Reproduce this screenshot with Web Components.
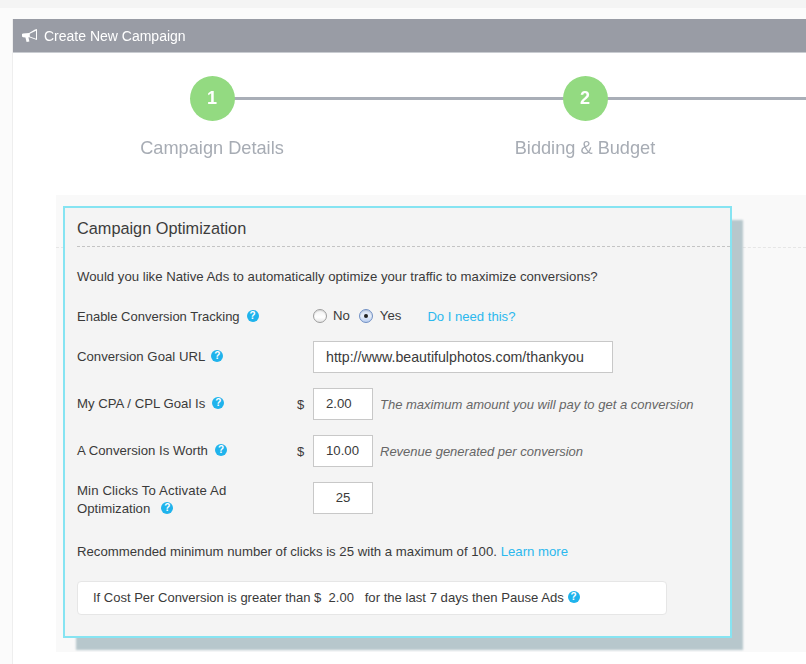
<!DOCTYPE html>
<html>
<head>
<meta charset="utf-8">
<title>Create New Campaign</title>
<style>
  html, body { margin: 0; height: 100%; overflow: hidden; }
  body { background: #fbfbfb; border-top: 8px solid #f4f4f4; box-sizing: border-box; font-family: "Liberation Sans", Arial, sans-serif; color: #3a3a3a; }
  .link { color: #2bb8ee; }
</style>
</head>
<body>
<campaign-panel heading="Create New Campaign">
  <step-track>
    <step-item number="1" label="Campaign Details"></step-item>
    <step-item number="2" label="Bidding &amp; Budget"></step-item>
  </step-track>
  <opt-section>
    <opt-card heading="Campaign Optimization">
      <p class="q">Would you like Native Ads to automatically optimize your traffic to maximize conversions?</p>

      <form-row style="height:32px;margin-top:15px">
        <span slot="label" style="font-size:13px">Enable Conversion Tracking<help-icon style="margin-left:7px"></help-icon></span>
        <radio-opt text="No" style="margin-left:0"></radio-opt>
        <radio-opt text="Yes" checked style="margin-left:9px"></radio-opt>
        <a class="link" style="margin:-2px 0 0 26px;font-size:13.1px">Do I need this?</a>
      </form-row>

      <form-row style="margin-top:8px">
        <span slot="label">Conversion Goal URL<help-icon style="margin-left:6px"></help-icon></span>
        <text-box value="http://www.beautifulphotos.com/thankyou" width="300" style="font-size:14.2px"></text-box>
      </form-row>

      <form-row style="margin-top:15px" prefix="$">
        <span slot="label">My CPA / CPL Goal Is<help-icon style="margin-left:7px"></help-icon></span>
        <text-box value="2.00" width="60"></text-box>
        <em class="hint">The maximum amount you will pay to get a conversion</em>
      </form-row>

      <form-row style="margin-top:15px" prefix="$">
        <span slot="label">A Conversion Is Worth<help-icon style="margin-left:7px"></help-icon></span>
        <text-box value="10.00" width="60"></text-box>
        <em class="hint">Revenue generated per conversion</em>
      </form-row>

      <form-row style="margin-top:15px;align-items:flex-start">
        <span slot="label"><span style="letter-spacing:.12px">Min Clicks To Activate Ad</span><br>Optimization<help-icon style="margin-left:11px"></help-icon></span>
        <text-box value="25" width="60" align="center"></text-box>
      </form-row>

      <p class="rec">Recommended minimum number of clicks is 25 with a maximum of 100. <a class="link">Learn more</a></p>

      <rule-box>If Cost Per Conversion is greater than $&nbsp; 2.00 &nbsp; <span style="font-size:13.14px">for the last 7 days then Pause Ads</span> <help-icon></help-icon></rule-box>
    </opt-card>
  </opt-section>
</campaign-panel>

<template id="campaign-panel-tpl">
  <style>
    :host { display: block; margin: 11px 0 0 13px; padding-bottom: 40px; background: #fff; box-shadow: -1px 0 0 #eee; }
    header { height: 34px; box-sizing: border-box; background: #999ca5; border-bottom: 1px solid #c9ccd1; color: #fff; font-size: 14px;
      display: flex; align-items: center; padding-left: 9px; filter: blur(.5px); }
    svg { width: 15px; height: 13px; margin-right: 7px; fill: #fff; }
  </style>
  <header>
    <svg viewBox="0 0 15 13"><path d="M0 5 L1 4.4 L7 4 L13 .6 L15 0 V11 L13.4 10.6 L7.2 8.2 L6.4 8.3 L7.4 12.4 L4.6 13 L3.4 8.4 L1 8.2 L0 7.6 Z M7.8 4.7 V7.5 L14 9.8 V1.8 Z"/></svg>
    <span id="h"></span>
  </header>
  <slot></slot>
</template>

<template id="step-track-tpl">
  <style>
    :host { display: block; height: 142px; overflow: hidden; filter: blur(.5px); }
    .row { display: flex; padding-left: 35px; gap: 45px; width: 900px; position: relative; }
    .line { position: absolute; left: 199px; right: 0; top: 44px; height: 3px; background: #a9aeb7; }
  </style>
  <div class="row"><div class="line"></div><slot></slot></div>
</template>

<template id="step-item-tpl">
  <style>
    :host { display: flex; flex-direction: column; align-items: center; width: 328px; padding-top: 23px; position: relative; z-index: 1; }
    .dot { width: 45px; height: 45px; border-radius: 50%; background: #93da81; color: #fff; font: bold 18px/45px "Liberation Sans", Arial, sans-serif; text-align: center; }
    .lbl { margin-top: 15px; font-size: 18.2px; line-height: 24px; color: #a7acb4; white-space: nowrap; }
  </style>
  <div class="dot" id="n"></div>
  <div class="lbl" id="l"></div>
</template>

<template id="opt-section-tpl">
  <style>
    :host { display: block; margin-left: 43px; background: #f9f9f9; padding: 11px 0 14px 7px; position: relative; }
    .dash { position: absolute; left: 0; right: 0; top: 52px; border-top: 1px dashed #e6e6e6; }
    ::slotted(*) { position: relative; }
  </style>
  <div class="dash"></div>
  <slot></slot>
</template>

<template id="opt-card-tpl">
  <style>
    :host { display: block; width: 669px; height: 432px; box-sizing: border-box; background: #f4f4f4; border: 2px solid #86e4f2;
      box-shadow: 12px 13px 2px -1px #b7c7cc; padding: 0 12px; font-size: 13.2px; color: #3a3a3a; }
    h2 { margin: 0 -12px 0 0; height: 39px; box-sizing: border-box; border-bottom: 1px dashed #c4c4c4; font-size: 16.3px; font-weight: normal; line-height: 41px; color: #3c3c3c; }
    ::slotted(.q) { margin: 21px 0 0; line-height: 18px; }
    ::slotted(.rec) { margin: 25px 0 0; line-height: 18px; }
  </style>
  <h2 id="h"></h2>
  <slot></slot>
</template>

<template id="form-row-tpl">
  <style>
    :host { display: flex; align-items: center; color: #3a3a3a; }
    .label { width: 220px; flex: none; display: block; line-height: 18px; }
    .prefix { width: 16px; flex: none; font-size: 13px; }
    .rest { display: flex; align-items: center; }
    ::slotted(.hint) { margin-left: 7px; color: #666; font-size: 13px; white-space: nowrap; }
  </style>
  <div class="label"><slot name="label"></slot></div>
  <div class="prefix" id="p"></div>
  <div class="rest"><slot></slot></div>
</template>

<template id="help-icon-tpl">
  <style>
    :host { display: inline-block; width: 12px; height: 12px; border-radius: 50%; background: #1fb3ec; color: #fff;
      font: bold 10px/12px "Liberation Sans", Arial, sans-serif; text-align: center; vertical-align: 2px; }
  </style>?
</template>

<template id="radio-opt-tpl">
  <style>
    :host { display: inline-flex; align-items: center; color: #3a3a3a; font-size: 13.2px; position: relative; top: -1px; }
    i { width: 12px; height: 12px; border-radius: 50%; border: 1px solid #9d9d9d; background: linear-gradient(#f2f2f2, #fff 60%, #e6e6e6); margin-right: 6px; display: flex; align-items: center; justify-content: center; box-shadow: inset 0 1px 1px rgba(0,0,0,.12); }
    :host([checked]) i { border-color: #6f8fc4; margin-right: 7px; background: linear-gradient(#cfdcf3, #e8effa 50%, #b9cdf0); }
    :host([checked]) i::after { content: ""; width: 4px; height: 4px; border-radius: 50%; background: #222; }
    span { position: relative; top: -1px; }
  </style>
  <i></i><span id="t"></span>
</template>

<template id="text-box-tpl">
  <style>
    :host { display: block; flex: none; height: 32px; box-sizing: border-box; background: #fff; border: 1px solid #c8c8c8; padding-left: 12px; font-size: 13.2px; line-height: 30px; color: #3a3a3a; }
    :host([align=center]) { text-align: center; padding-left: 0; }
  </style>
  <span id="v"></span>
</template>

<template id="rule-box-tpl">
  <style>
    :host { display: block; width: 590px; height: 34px; box-sizing: border-box; margin-top: 20px; background: #fff; border: 1px solid #e6e6e6; border-radius: 4px; padding-left: 15px; font-size: 13px; line-height: 31px; color: #3a3a3a; white-space: nowrap; }
  </style>
  <slot></slot>
</template>

<script>
// plain helper so each class doesn't repeat the shadow root boilerplate
function mount(el, id) {
  el.attachShadow({ mode: 'open' });
  el.shadowRoot.appendChild(document.getElementById(id).content.cloneNode(true));
  return el.shadowRoot;
}

class CampaignPanel extends HTMLElement {
  constructor() { super(); mount(this, 'campaign-panel-tpl'); }
  connectedCallback() { this.shadowRoot.getElementById('h').textContent = this.getAttribute('heading'); }
}
class StepTrack extends HTMLElement {
  constructor() { super(); mount(this, 'step-track-tpl'); }
}
class StepItem extends HTMLElement {
  constructor() { super(); mount(this, 'step-item-tpl'); }
  connectedCallback() {
    this.shadowRoot.getElementById('n').textContent = this.getAttribute('number');
    this.shadowRoot.getElementById('l').textContent = this.getAttribute('label');
  }
}
class OptSection extends HTMLElement {
  constructor() { super(); mount(this, 'opt-section-tpl'); }
}
class OptCard extends HTMLElement {
  constructor() { super(); mount(this, 'opt-card-tpl'); }
  connectedCallback() { this.shadowRoot.getElementById('h').textContent = this.getAttribute('heading'); }
}
class FormRow extends HTMLElement {
  constructor() { super(); mount(this, 'form-row-tpl'); }
  connectedCallback() { this.shadowRoot.getElementById('p').textContent = this.getAttribute('prefix') || ''; }
}
class HelpIcon extends HTMLElement {
  constructor() { super(); mount(this, 'help-icon-tpl'); }
}
class RadioOpt extends HTMLElement {
  constructor() { super(); mount(this, 'radio-opt-tpl'); }
  connectedCallback() { this.shadowRoot.getElementById('t').textContent = this.getAttribute('text'); }
}
class TextBox extends HTMLElement {
  constructor() { super(); mount(this, 'text-box-tpl'); }
  connectedCallback() {
    this.style.width = this.getAttribute('width') + 'px';
    this.shadowRoot.getElementById('v').textContent = this.getAttribute('value');
  }
}
class RuleBox extends HTMLElement {
  constructor() { super(); mount(this, 'rule-box-tpl'); }
}

customElements.define('campaign-panel', CampaignPanel);
customElements.define('step-track', StepTrack);
customElements.define('step-item', StepItem);
customElements.define('opt-section', OptSection);
customElements.define('opt-card', OptCard);
customElements.define('form-row', FormRow);
customElements.define('help-icon', HelpIcon);
customElements.define('radio-opt', RadioOpt);
customElements.define('text-box', TextBox);
customElements.define('rule-box', RuleBox);
</script>
</body>
</html>
